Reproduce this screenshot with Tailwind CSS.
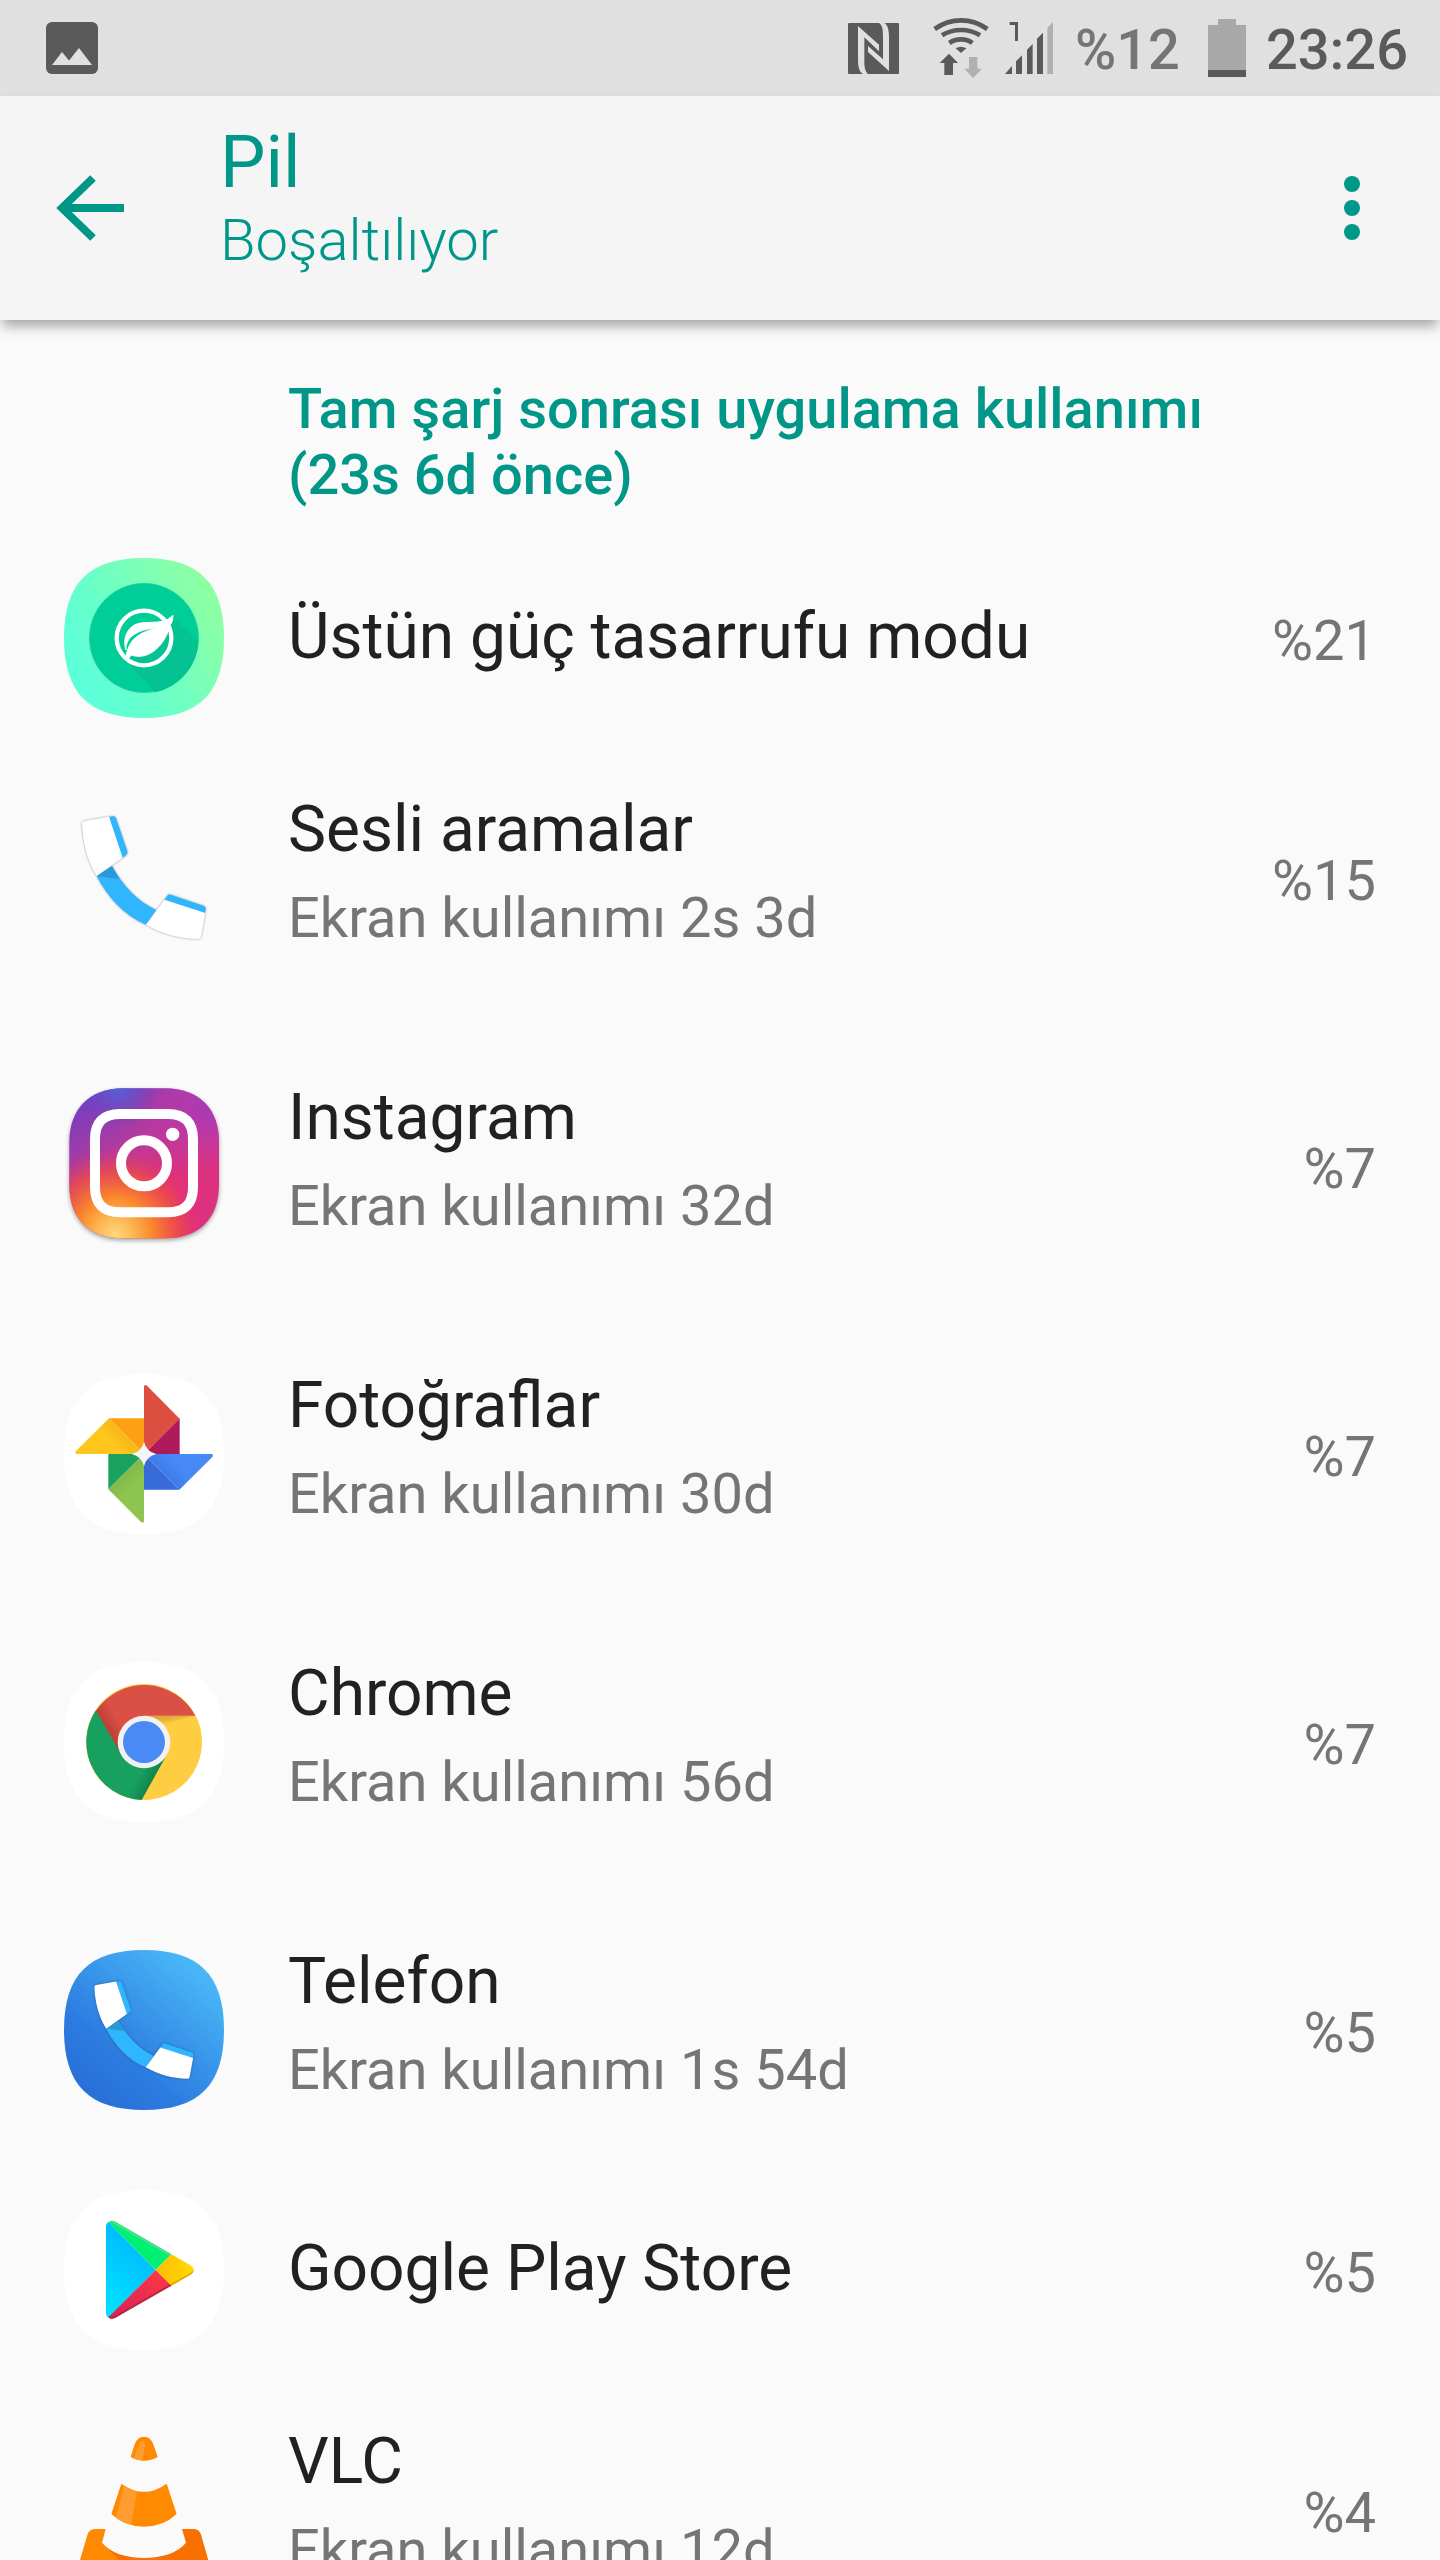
<!DOCTYPE html>
<html lang="tr">
<head>
<meta charset="utf-8">
<meta name="viewport" content="width=device-width, initial-scale=1">
<title>Pil</title>
<script src="https://cdn.jsdelivr.net/npm/@tailwindcss/browser@4"></script>
</head>
<body class="flex h-screen flex-col bg-[#fafafa] font-[Roboto,sans-serif] text-[#212121]">

<!-- Shared icon shapes -->
<svg class="absolute size-0" aria-hidden="true">
  <defs>
    <path id="squircle" d="M240 0C405 0 480 75 480 240S405 480 240 480 0 405 0 240 75 0 240 0Z"/>
    <linearGradient id="mint" x1="0.1" y1=".75" x2=".95" y2=".25"><stop offset="0" stop-color="#5cffd8"/><stop offset=".3" stop-color="#66ffcc"/><stop offset="1" stop-color="#8effa2"/></linearGradient>
    <linearGradient id="blue" x1=".2" y1=".95" x2=".85" y2=".15"><stop offset="0" stop-color="#2770d8"/><stop offset=".3" stop-color="#2c7be0"/><stop offset="1" stop-color="#48b6f6"/></linearGradient>
    <g id="handset">
      <path d="M170 288L216 259C250 318 292 364 348 390L318 434C255 408 205 355 170 288Z" fill="#2fb6ff"/>
      <path d="M170 288L216 259L239 298Z" fill="#2799d6"/>
      <path d="M207 111L218 109Q225 108 228 115L262 214Q264 221 259 225L247 234Z" fill="#2fb6ff"/>
      <path d="M133 123L207 110L248 233L170 288C140 240 128 185 126 130Q126 124 133 123Z" fill="#fff"/>
      <path d="M373 360L382 347Q386 342 392 344L492 378Q498 380 497 388L495 400Z" fill="#2fb6ff"/>
      <path d="M373 359L496 399L483 470Q481 477 474 477C420 476 365 462 318 434Z" fill="#fff"/>
    </g>
  </defs>
</svg>

<div class="flex h-24 shrink-0 items-center bg-[#e0e0e0] pr-8 pl-[46px] text-[#5a5a5a]">
  <svg class="h-[52px] w-[52px]" viewBox="0 0 52 52" role="img" aria-label="Ekran görüntüsü">
    <rect width="52" height="52" rx="6" fill="currentColor"/>
    <path d="M6 43L16 30L23 38.500L33 26L46 43Z" fill="#e0e0e0"/>
  </svg>
  <svg class="ml-auto h-[51px] w-[51px]" viewBox="81 69 153 153" role="img" aria-label="NFC">
    <rect x="81" y="69" width="153" height="153" rx="3" fill="currentColor"/>
    <path d="M111 78L174 134V154L130 112V186C130 205 134 216 141 222H126C115 216 111 200 111 180ZM204 213L141 156V138L186 178V108C186 86 183 74 174 69H190C200 74 204 90 204 112Z" fill="#e0e0e0"/>
  </svg>
  <svg class="ml-[34px] h-[60px] w-14" viewBox="336 54 168 180" role="img" aria-label="Wi-Fi">
    <g fill="none" stroke="currentColor" stroke-width="14">
      <path d="M341 87Q377 61 420 61T499 87"/><path d="M363 106Q388 90 420 90T477 106"/><path d="M385 129Q400 118 420 118T454 129"/>
    </g>
    <path d="M404 145Q420 135 436 145L420 159ZM384 161L411 189H396V225H370V189H356Z" fill="currentColor"/>
    <path d="M444 171H469V206H483L456 234L430 206H444Z" fill="#b0b0b0"/>
  </svg>
  <svg class="ml-4 h-[52px] w-12" viewBox="552 66 144 156" role="img" aria-label="Sinyal">
    <path d="M566 66H591V123H582V75H566ZM552 222L573 198V222ZM585 222V184L603 166V222ZM618 222V149L635 132V222ZM648 222V116L666 98V222Z" fill="currentColor"/>
    <path d="M679 222V84L696 66V222Z" fill="#b0b0b0"/>
  </svg>
  <span class="ml-[22px] pt-1 text-[56px] leading-[66px] font-medium text-[#757575]">%12</span>
  <svg class="ml-7 h-[58px] w-[38px]" viewBox="0 0 38 58" role="img" aria-label="Pil düzeyi">
    <path d="M10 0H28V6H38V51H0V6H10Z" fill="#a9a9a9"/><path d="M0 51H38V58H0Z" fill="currentColor"/>
  </svg>
  <time class="ml-5 pt-1 text-[56px] leading-[66px] font-medium">23:26</time>
</div>

<header class="relative flex h-56 shrink-0 items-center bg-[#f5f5f5] pr-10 pl-14 text-[#009688] shadow-[0_8px_12px_-2px_rgba(0,0,0,0.35)]">
  <button class="h-[68px] w-[68px]" aria-label="Geri">
    <svg class="h-full w-full" viewBox="0 0 68 68" fill="none" stroke="currentColor" stroke-width="8"><path d="M37 4L6 34L37 64M6 34H68"/></svg>
  </button>
  <div class="ml-24 flex-1 pb-5">
    <h1 class="text-[72px] leading-[84px]">Pil</h1>
    <p class="text-[58px] leading-[70px] font-light">Boşaltılıyor</p>
  </div>
  <button class="flex h-24 w-24 flex-col items-center justify-center gap-2" aria-label="Diğer seçenekler">
    <span class="size-4 rounded-full bg-current"></span><span class="size-4 rounded-full bg-current"></span><span class="size-4 rounded-full bg-current"></span>
  </button>
</header>

<main class="min-h-0 flex-1 overflow-y-auto [scrollbar-width:none]">
  <h2 class="h-[222px] pt-14 pr-16 pl-72 text-[56px] leading-[66px] font-medium text-[#009688]">Tam şarj sonrası uygulama kullanımı<br>(23s 6d önce)</h2>
  <ul>
    <li><a href="#" class="flex h-48 items-center px-16">
      <svg class="size-40 shrink-0" viewBox="72 54 480 480" aria-hidden="true">
        <use href="#squircle" x="72" y="54" fill="url(#mint)"/>
        <circle cx="312" cy="294" r="164" fill="#00ce98" stroke="#35c99a" stroke-width="2"/>
        <path d="M250 355L346 457A164 164 0 0 0 475 303L397 232Z" fill="#04c291"/>
        <circle cx="312" cy="294" r="82" fill="none" stroke="#fff" stroke-width="13"/>
        <path d="M399 226C398 242 396 249 390 256C378 306 341 348 298 349Q284 349 273 345L267 354L258 350C262 328 270 306 286 293C305 277 330 270 350 263C309 267 275 280 263 304Q256 318 258 330C248 300 258 270 283 255C308 242 340 251 372 243Q385 239 399 226Z" fill="#fff" stroke="#fff" stroke-width="3"/>
      </svg>
      <h3 class="ml-16 flex-1 pb-0.5 text-[64px] leading-20">Üstün güç tasarrufu modu</h3>
      <span class="pt-1.5 text-[56px] leading-[66px] text-[#757575]">%21</span>
    </a></li>
    <li><a href="#" class="flex h-72 items-center px-16">
      <svg class="size-40 shrink-0 drop-shadow-[0_0_1px_rgba(0,0,0,0.4)]" viewBox="72 54 480 480" aria-hidden="true"><use href="#handset"/></svg>
      <div class="ml-16 flex flex-1 flex-col gap-2 pb-2">
        <h3 class="text-[64px] leading-20">Sesli aramalar</h3>
        <p class="text-[56px] leading-20 text-[#757575]">Ekran kullanımı 2s 3d</p>
      </div>
      <span class="pt-1.5 text-[56px] leading-[66px] text-[#757575]">%15</span>
    </a></li>
    <li><a href="#" class="flex h-72 items-center px-16">
      <svg class="size-40 shrink-0 drop-shadow-[0_2px_2px_rgba(0,0,0,0.35)]" viewBox="72 63 480 480" aria-hidden="true">
        <defs>
          <linearGradient id="ig-base" x1=".1" y1="0" x2=".75" y2="1"><stop offset="0" stop-color="#6a3fc4"/><stop offset=".4" stop-color="#b63a9c"/><stop offset=".7" stop-color="#e0317a"/><stop offset="1" stop-color="#dd3080"/></linearGradient>
          <radialGradient id="ig-warm" gradientUnits="userSpaceOnUse" cx="225" cy="510" r="265"><stop offset="0" stop-color="#ffd77c"/><stop offset=".18" stop-color="#fdbb58"/><stop offset=".42" stop-color="#fb8a2c"/><stop offset=".72" stop-color="#f0503f" stop-opacity=".75"/><stop offset="1" stop-color="#e2306c" stop-opacity="0"/></radialGradient>
          <radialGradient id="ig-blue" gradientUnits="userSpaceOnUse" cx="235" cy="62" r="130"><stop offset="0" stop-color="#4f68d8"/><stop offset="1" stop-color="#6a3fc4" stop-opacity="0"/></radialGradient>
          <radialGradient id="ig-violet" gradientUnits="userSpaceOnUse" cx="500" cy="130" r="230"><stop offset="0" stop-color="#a83ab8"/><stop offset="1" stop-color="#c837a0" stop-opacity="0"/></radialGradient>
          <path id="ig-tile" d="M250 70H374C480 70 537 135 537 230V360C537 460 478 520 374 520H250C146 520 88 460 88 360V230C88 135 146 70 250 70Z"/>
        </defs>
        <use href="#ig-tile" fill="url(#ig-base)"/><use href="#ig-tile" fill="url(#ig-violet)"/><use href="#ig-tile" fill="url(#ig-blue)"/><use href="#ig-tile" fill="url(#ig-warm)"/>
        <path d="M240 147H384Q459 147 459 222V367Q459 442 384 442H240Q165 442 165 367V222Q165 147 240 147Z" fill="none" stroke="#fff" stroke-width="30"/>
        <circle cx="312" cy="295" r="69" fill="none" stroke="#fff" stroke-width="30"/>
        <circle cx="398" cy="208" r="20" fill="#fff"/>
      </svg>
      <div class="ml-16 flex flex-1 flex-col gap-2 pb-2">
        <h3 class="text-[64px] leading-20">Instagram</h3>
        <p class="text-[56px] leading-20 text-[#757575]">Ekran kullanımı 32d</p>
      </div>
      <span class="pt-1.5 text-[56px] leading-[66px] text-[#757575]">%7</span>
    </a></li>
    <li><a href="#" class="flex h-72 items-center px-16">
      <svg class="size-40 shrink-0" viewBox="72 72 480 480" aria-hidden="true">
        <defs>
          <linearGradient id="ph-y" gradientUnits="userSpaceOnUse" x1="256" y1="260" x2="225" y2="290"><stop offset="0" stop-color="#f6b91a"/><stop offset="1" stop-color="#ffc61c"/></linearGradient>
          <linearGradient id="ph-b" gradientUnits="userSpaceOnUse" x1="368" y1="364" x2="398" y2="334"><stop offset="0" stop-color="#3f7be8"/><stop offset="1" stop-color="#4688f4"/></linearGradient>
          <linearGradient id="ph-g" gradientUnits="userSpaceOnUse" x1="258" y1="366" x2="288" y2="396"><stop offset="0" stop-color="#81b848"/><stop offset="1" stop-color="#8dc550"/></linearGradient>
        </defs>
        <use href="#squircle" x="72" y="72" fill="#fff"/>
        <path d="M312 312V205H207Z" fill="#ffa012"/><path d="M312 312L207 205L107 304Q103 312 112 312Z" fill="url(#ph-y)"/>
        <path d="M312 312H419V205Z" fill="#ae1b5a"/><path d="M312 312L419 206L321 107Q312 102 312 111Z" fill="#dd4f41"/>
        <path d="M312 312V419H418Z" fill="#376bd8"/><path d="M312 312L418 419L517 321Q522 312 513 312Z" fill="url(#ph-b)"/>
        <path d="M312 312H205V418Z" fill="#1aa260"/><path d="M312 312L205 418L303 516Q312 521 312 512Z" fill="url(#ph-g)"/>
        <path d="M312 275Q319 305 349 312Q319 319 312 349Q305 319 275 312Q305 305 312 275Z" fill="#f5f5f5"/>
      </svg>
      <div class="ml-16 flex flex-1 flex-col gap-2 pb-2">
        <h3 class="text-[64px] leading-20">Fotoğraflar</h3>
        <p class="text-[56px] leading-20 text-[#757575]">Ekran kullanımı 30d</p>
      </div>
      <span class="pt-1.5 text-[56px] leading-[66px] text-[#757575]">%7</span>
    </a></li>
    <li><a href="#" class="flex h-72 items-center px-16">
      <svg class="size-40 shrink-0" viewBox="72 66 480 480" aria-hidden="true">
        <defs>
          <linearGradient id="cr-r" gradientUnits="userSpaceOnUse" x1="195" y1="265" x2="235" y2="240"><stop offset="0" stop-color="#b83f34"/><stop offset="1" stop-color="#db5045"/></linearGradient>
          <linearGradient id="cr-g" gradientUnits="userSpaceOnUse" x1="345" y1="425" x2="300" y2="400"><stop offset="0" stop-color="#0f8149"/><stop offset="1" stop-color="#18a05e"/></linearGradient>
          <linearGradient id="cr-y" gradientUnits="userSpaceOnUse" x1="400" y1="227" x2="404" y2="252"><stop offset="0" stop-color="#dda936"/><stop offset="1" stop-color="#ffcd42"/></linearGradient>
        </defs>
        <use href="#squircle" x="72" y="66" fill="#fff"/>
        <circle cx="312" cy="306" r="174" fill="#ffcd42"/>
        <path d="M312 227H466L376 251Z" fill="url(#cr-y)"/>
        <path d="M168 210A174 174 0 0 0 305 480L380 345L312 306L240 330Z" fill="url(#cr-g)"/>
        <path d="M168 212A174 174 0 0 1 466 227H312L245 345Z" fill="url(#cr-r)"/>
        <circle cx="312" cy="306" r="79" fill="#f1f1f1"/><circle cx="312" cy="306" r="63" fill="#4a8af4"/>
      </svg>
      <div class="ml-16 flex flex-1 flex-col gap-2 pb-2">
        <h3 class="text-[64px] leading-20">Chrome</h3>
        <p class="text-[56px] leading-20 text-[#757575]">Ekran kullanımı 56d</p>
      </div>
      <span class="pt-1.5 text-[56px] leading-[66px] text-[#757575]">%7</span>
    </a></li>
    <li><a href="#" class="flex h-72 items-center px-16">
      <svg class="size-40 shrink-0" viewBox="72 60 480 480" aria-hidden="true">
        <use href="#squircle" x="72" y="60" fill="url(#blue)"/>
        <g class="drop-shadow-[0_0_4px_rgba(0,0,0,0.3)]"><use href="#handset" transform="matrix(.8 0 0 .795 62.500 67)"/></g>
      </svg>
      <div class="ml-16 flex flex-1 flex-col gap-2 pb-2">
        <h3 class="text-[64px] leading-20">Telefon</h3>
        <p class="text-[56px] leading-20 text-[#757575]">Ekran kullanımı 1s 54d</p>
      </div>
      <span class="pt-1.5 text-[56px] leading-[66px] text-[#757575]">%5</span>
    </a></li>
    <li><a href="#" class="flex h-48 items-center px-16">
      <svg class="size-40 shrink-0" viewBox="72 60 480 480" aria-hidden="true">
        <defs>
          <linearGradient id="pl-b" x1=".6" y1="0" x2=".2" y2="1"><stop offset="0" stop-color="#00b4ff"/><stop offset="1" stop-color="#00e2ff"/></linearGradient>
          <linearGradient id="pl-y" x1="0" y1="0" x2="1" y2="0"><stop offset="0" stop-color="#ffbc00"/><stop offset="1" stop-color="#ffdb00"/></linearGradient>
          <linearGradient id="pl-r" x1="1" y1="0" x2="0" y2="1"><stop offset="0" stop-color="#ff3a44"/><stop offset="1" stop-color="#d4215a"/></linearGradient>
        </defs>
        <use href="#squircle" x="72" y="60" fill="#fff"/>
        <path d="M205 156L347 300L205 443Q198 440 198 430V170Q198 160 205 156Z" fill="url(#pl-b)"/>
        <path d="M205 157Q213 149 226 155L394 253L347 300Z" fill="#00f076"/>
        <path d="M209 154Q216 150 226 155L394 253L389 257L222 161Z" fill="#4edd8c"/>
        <path d="M394 253L450 285Q472 300 450 315L394 347L347 300Z" fill="url(#pl-y)"/>
        <path d="M394 347L226 443Q213 450 205 442L347 300Z" fill="url(#pl-r)"/>
        <path d="M205 442L209 438Q216 441 224 438L390 343L394 347L226 443Q213 450 205 442Z" fill="#b52843"/>
        <path d="M390 343L450 309Q458 305 462 300Q461 309 450 315L394 347Z" fill="#dfae06"/>
      </svg>
      <h3 class="ml-16 flex-1 pb-0.5 text-[64px] leading-20">Google Play Store</h3>
      <span class="pt-1.5 text-[56px] leading-[66px] text-[#757575]">%5</span>
    </a></li>
    <li><a href="#" class="flex h-72 items-center px-16">
      <svg class="size-40 shrink-0" viewBox="72 90 480 480" aria-hidden="true">
        <path d="M165 387H459Q478 387 483 405L520 535Q524 554 505 554H119Q100 554 104 535L142 405Q147 387 165 387Z" fill="#ff8a00"/>
        <path d="M426 387H459Q478 387 483 405L520 535Q524 554 505 554H310L187 430Z" fill="#f77000"/>
        <path d="M197 387H426L438 428C415 458 365 474 312 474S210 458 186 428Z" fill="#fafafa"/>
        <path d="M272 171L284 133Q292 110 312 110T340 133L353 171Q312 194 272 171ZM244 251Q312 300 380 251L410 342Q370 380 312 380T214 342Z" fill="#ff8a00"/>
        <path d="M281 176L295 137Q301 122 309 122Q317 124 315 138L308 182ZM252 257L228 353Q248 368 274 375L291 275Q270 270 252 257Z" fill="#ff9c30"/>
      </svg>
      <div class="ml-16 flex flex-1 flex-col gap-2 pb-2">
        <h3 class="text-[64px] leading-20">VLC</h3>
        <p class="text-[56px] leading-20 text-[#757575]">Ekran kullanımı 12d</p>
      </div>
      <span class="pt-1.5 text-[56px] leading-[66px] text-[#757575]">%4</span>
    </a></li>
  </ul>
</main>
</body>
</html>
